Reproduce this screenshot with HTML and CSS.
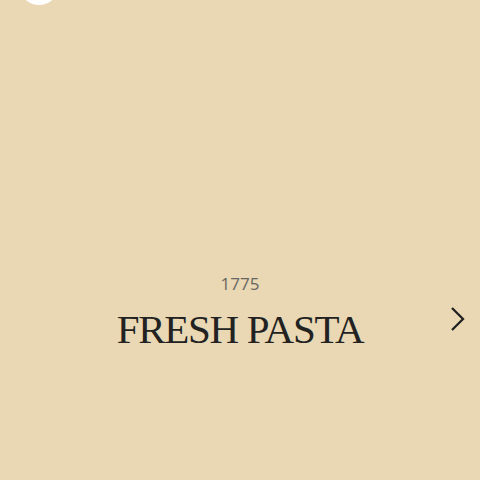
FILE: index.html
```html
<!DOCTYPE html>
<html lang="en">
<head>
    <meta charset="UTF-8">
    <meta name="viewport" content="width=device-width, initial-scale=1.0">
    <link rel="stylesheet" href="styles.css">
    <title>Fresh Pasta</title>
</head>
<body>
    <div class="slider">
      <span class="slider-dot"></span>
      <div class="slide">
        <span class="slide-year">1775</span>
        <h1 class="slide-title">FRESH PASTA</h1>
      </div>
      <button class="slider-next" aria-label="Next">
        <svg width="16" height="26" viewBox="0 0 16 26">
          <path d="M2 2 L13 13 L2 24" fill="none" stroke="#222" stroke-width="2.3"/>
        </svg>
      </button>
    </div>
</body>
</html>
```

FILE: styles.css
```css
html,body {
  height: 100%;
  margin: 0;
  padding: 0;
}
body {
  background-color: #e9d8b3;
}
.slider {
  position: relative;
  height: 480px;
  overflow: hidden;
}
.slider-dot {
  position: absolute;
  left: 19px;
  top: -35px;
  width: 40px;
  height: 40px;
  border-radius: 50%;
  background-color: #fff;
}
.slide {
  height: 100%;
  box-sizing: border-box;
  display: flex;
  flex-direction: column;
  align-items: center;
  justify-content: flex-end;
  padding-bottom: 127px;
}
.slide-year {
  font-family: "Open Sans", sans-serif;
  font-size: 17px;
  line-height: 20px;
  color: #666662;
  margin-bottom: 11px;
}
.slide-title {
  margin: 0;
  font-family: "Liberation Serif", serif;
  font-weight: normal;
  font-size: 41px;
  line-height: 48px;
  letter-spacing: -1.3px;
  color: #222;
}
.slider-next {
  position: absolute;
  right: 14px;
  top: 306px;
  padding: 0;
  border: 0;
  background: none;
  display: flex;
}
```
